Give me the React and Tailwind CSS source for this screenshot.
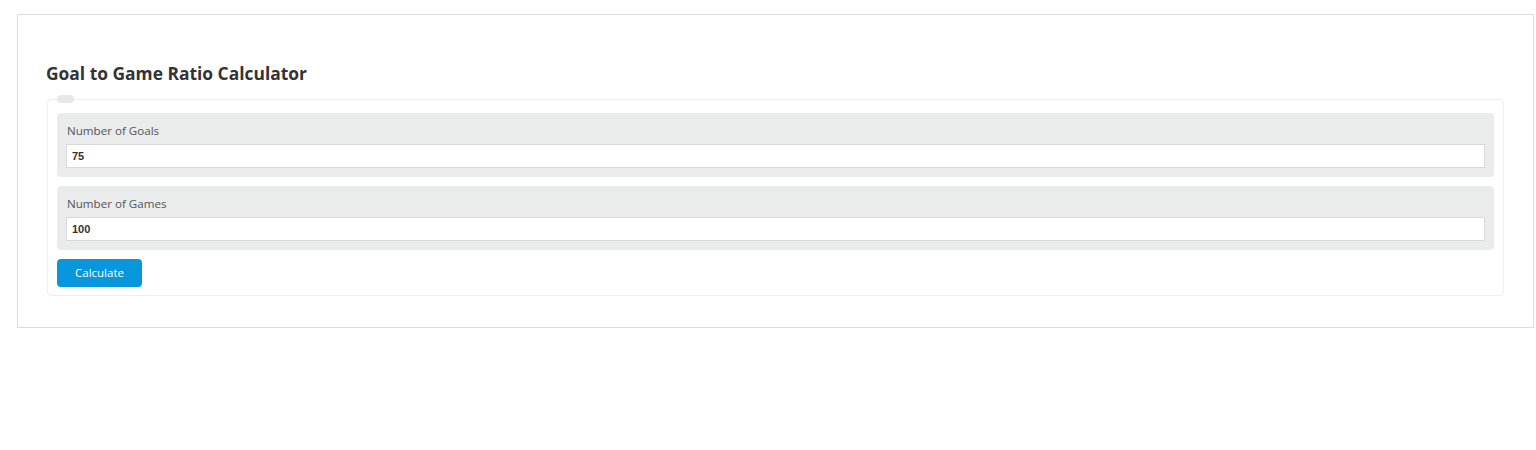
import React, { useState } from 'react';

const fields = [
  { label: 'Number of Goals', value: '75' },
  { label: 'Number of Games', value: '100' },
];

export default function App() {
  const [values, setValues] = useState(fields.map((f) => f.value));

  return (
    <div className="min-h-[450px] bg-white pt-[14px] pl-[17px] font-['Open_Sans',sans-serif]">
      {/* Calculator card */}
      <div className="w-[1517px] border border-[#dddddd] pt-[46px] pb-[31px] pl-[29px] pr-[29px]">
        <h2 className="-ml-px mb-[14px] text-[17.4px] font-bold leading-[24px] text-[#333333]">
          Goal to Game Ratio Calculator
        </h2>

        <div className="relative rounded-[4px] border border-[#eeeeee] px-[9px] pt-[13px] pb-[8px]">
          {/* legend pill */}
          <span className="absolute left-[9px] top-[-5px] h-[8px] w-[17px] rounded-full bg-[#e6e7e7]" />

          <div className="flex flex-col gap-[9px]">
            {fields.map((field, i) => (
              <div key={field.label} className="rounded-[4px] bg-[#eaebeb] px-[9px] pt-[9px] pb-[9px]">
                <label className="block pl-px text-[11.6px] leading-[18px] text-[#555555]">{field.label}</label>
                <input
                  className="mt-[4px] block h-[24px] w-full border border-[#d9d9d9] bg-white px-[5px] font-['Liberation_Sans',sans-serif] text-[11px] font-bold text-[#333333] outline-none"
                  value={values[i]}
                  onChange={(e) => {
                    const next = [...values];
                    next[i] = e.target.value;
                    setValues(next);
                  }}
                />
              </div>
            ))}

            <button className="h-[28px] w-[85px] rounded-[4px] bg-[#0896dc] text-[11.5px] text-white">
              Calculate
            </button>
          </div>
        </div>
      </div>
    </div>
  );
}
